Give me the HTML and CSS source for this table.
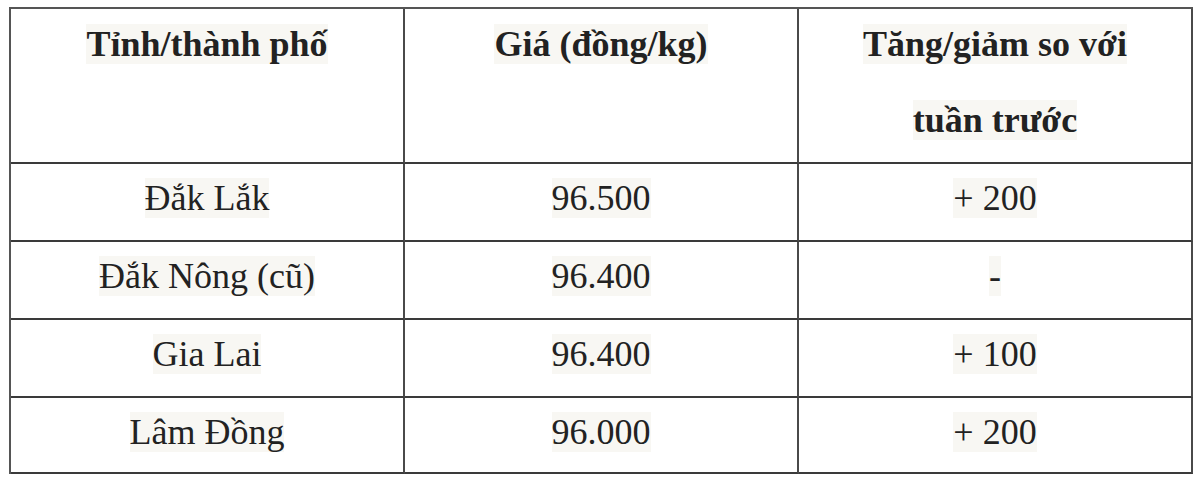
FILE: index.html
```html
<!DOCTYPE html>
<html lang="vi">
<head>
<meta charset="utf-8">
<title>Giá</title>
<link rel="stylesheet" href="styles.css">
</head>
<body>
<table class="price">
  <colgroup><col class="c"><col class="c"><col class="c"></colgroup>
  <thead>
    <tr class="head">
      <th><span class="hl">Tỉnh/thành phố</span></th>
      <th><span class="hl">Giá (đồng/kg)</span></th>
      <th><div class="two"><span class="ln"><span class="hl">Tăng/giảm so với</span></span><span class="ln"><span class="hl">tuần trước</span></span></div></th>
    </tr>
  </thead>
  <tbody>
    <tr class="r">
      <td><span class="hl">Đắk Lắk</span></td>
      <td><span class="hl">96.500</span></td>
      <td><span class="hl">+ 200</span></td>
    </tr>
    <tr class="r">
      <td><span class="hl">Đắk Nông (cũ)</span></td>
      <td><span class="hl">96.400</span></td>
      <td><span class="hl">-</span></td>
    </tr>
    <tr class="r">
      <td><span class="hl">Gia Lai</span></td>
      <td><span class="hl">96.400</span></td>
      <td><span class="hl">+ 100</span></td>
    </tr>
    <tr class="r last">
      <td><span class="hl">Lâm Đồng</span></td>
      <td><span class="hl">96.000</span></td>
      <td><span class="hl">+ 200</span></td>
    </tr>
  </tbody>
</table>
</body>
</html>
```

FILE: styles.css
```css
html, body {
  margin: 0;
  padding: 0;
  background: #ffffff;
}
body {
  font-family: "Liberation Serif", "Times New Roman", serif;
  color: #222222;
}
.price {
  margin: 7px 0 0 9px;
  border-collapse: separate;
  border-spacing: 0;
  table-layout: fixed;
  width: 1184px;
  border-top: 2px solid #555555;
  border-left: 2px solid #555555;
}
.c {
  width: 394px;
}
.price th,
.price td {
  box-sizing: border-box;
  border-right: 2px solid #4a4a4a;
  border-bottom: 2px solid #3a3a3a;
  text-align: center;
  vertical-align: top;
  padding: 14px 0 0 0;
  font-size: 36px;
  line-height: 40px;
}
.price th {
  font-weight: bold;
  padding-top: 15px;
  height: 155px;
}
.r td {
  height: 78px;
}
.r.last td {
  height: 76px;
}
.hl {
  background: #f8f7f3;
}
.two {
  display: flex;
  flex-direction: column;
  align-items: center;
  gap: 36px;
}
.ln {
  display: block;
}
```
